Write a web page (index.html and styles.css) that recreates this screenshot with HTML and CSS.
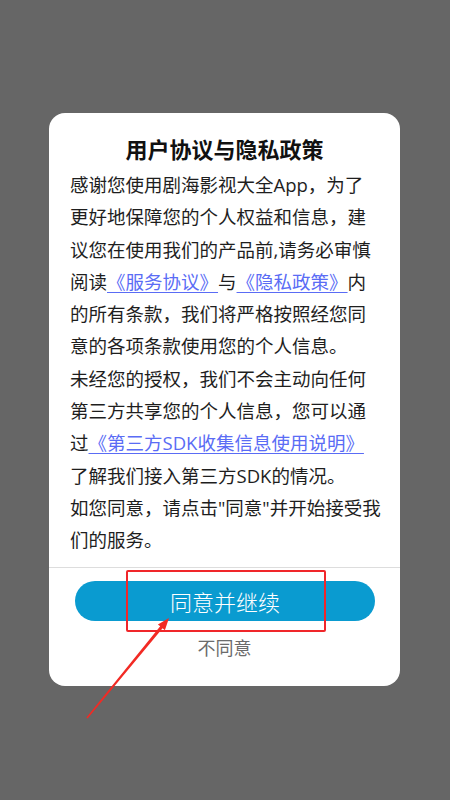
FILE: index.html
```html
<!DOCTYPE html>
<html lang="zh-CN">
<head>
<meta charset="utf-8">
<title>用户协议与隐私政策</title>
<link rel="stylesheet" href="styles.css">
</head>
<body>
<div class="screen">
  <div class="dialog">
    <h1 class="title">用户协议与隐私政策</h1>
    <p class="content">感谢您使用剧海影视大全App，为了<br>更好地保障您的个人权益和信息，建<br>议您在使用我们的产品前,请务必审慎<br>阅读<a class="link">《服务协议》</a>与<a class="link">《隐私政策》</a>内<br>的所有条款，我们将严格按照经您同<br>意的各项条款使用您的个人信息。<br>未经您的授权，我们不会主动向任何<br>第三方共享您的个人信息，您可以通<br>过<a class="link">《第三方SDK收集信息使用说明》</a><br>了解我们接入第三方SDK的情况。<br>如您同意，请点击"同意"并开始接受我<br>们的服务。</p>
    <div class="divider"></div>
    <div class="actions">
      <button class="agree">同意并继续</button>
      <div class="disagree">不同意</div>
    </div>
  </div>
  <div class="highlight"></div>
  <svg class="arrow" width="450" height="800" viewBox="0 0 450 800">
    <polygon points="87.6,718.4 162.6,628.3 164.9,630.2 169,618 157.9,624.4 160.2,626.3 86.4,717.6" fill="#f22a24"/>
  </svg>
</div>
</body>
</html>
```
FILE: styles.css
```css
html, body {
  margin: 0;
  padding: 0;
}
body {
  background: #666666;
  font-family: "Open Sans", "Noto Sans CJK SC", sans-serif;
}
.screen {
  position: relative;
  width: 450px;
  height: 800px;
  padding-top: 113px;
  box-sizing: border-box;
}
.dialog {
  margin-left: 49px;
  width: 351px;
  height: 573px;
  background: #ffffff;
  border-radius: 16px;
  box-sizing: border-box;
  padding-top: 20px;
  display: flex;
  flex-direction: column;
}
.title {
  margin: 0;
  font-family: "Noto Sans CJK SC", sans-serif;
  font-size: 22px;
  line-height: 30px;
  font-weight: bold;
  text-align: center;
  color: #111111;
}
.content {
  margin: 6px 0 0 21px;
  font-size: 18.5px;
  line-height: 32.3px;
  color: #1e1e1e;
  white-space: nowrap;
}
.link {
  color: #5a6cf5;
  text-decoration: underline;
  text-underline-offset: 3px;
  text-decoration-thickness: 1px;
}
.divider {
  margin-top: 10px;
  height: 1px;
  background: #dddddd;
}
.actions {
  display: flex;
  flex-direction: column;
  align-items: center;
  padding-top: 13px;
}
.agree {
  width: 300px;
  height: 40px;
  border: none;
  border-radius: 20px;
  background: #0a9bd0;
  color: #ffffff;
  font-family: "Noto Sans CJK SC", sans-serif;
  font-size: 22px;
  font-weight: 300;
  line-height: 40px;
  padding: 0;
  margin-left: 1px;
}
.disagree {
  margin-top: 14px;
  font-family: "Noto Sans CJK SC", sans-serif;
  font-size: 18px;
  line-height: 24px;
  color: #6b6b6b;
}
.highlight {
  position: absolute;
  left: 126px;
  top: 570px;
  width: 200px;
  height: 62px;
  box-sizing: border-box;
  border: 2px solid #f0262a;
  border-radius: 2px;
}
.arrow {
  position: absolute;
  left: 0;
  top: 0;
  pointer-events: none;
}
```
